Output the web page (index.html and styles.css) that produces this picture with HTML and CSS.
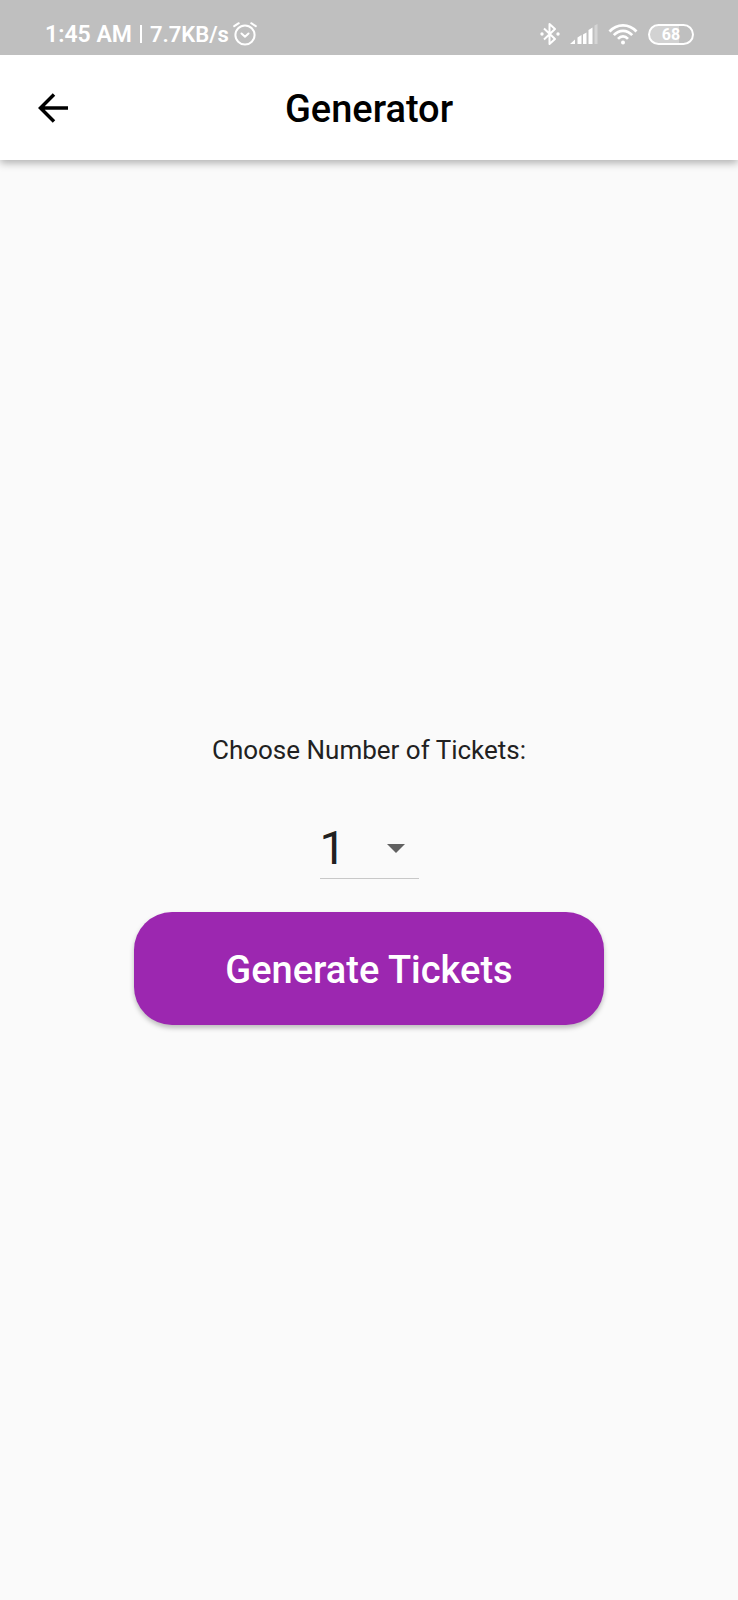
FILE: index.html
```html
<!DOCTYPE html>
<html lang="en">
<head>
<meta charset="utf-8">
<meta name="viewport" content="width=device-width, initial-scale=1">
<title>Generator</title>
<link rel="stylesheet" href="styles.css">
</head>
<body>
<div class="status-bar">
  <div class="status-left">
    <span class="clock">1:45 AM</span>
    <span class="divider"></span>
    <span class="speed">7.7KB/s</span>
    <svg class="alarm" width="24" height="24" viewBox="0 0 24 24" fill="none" stroke="#fff" stroke-width="2" stroke-linecap="round" stroke-linejoin="round" aria-hidden="true">
      <circle cx="12" cy="13" r="9.6"/>
      <path d="M1.2 4.2 5.800 1.200M22.800 4.200 18.200 1.200M8.500 11.500 12 14.800 15.500 11.500"/>
    </svg>
  </div>
  <div class="status-right">
    <svg width="20" height="24" viewBox="0 0 20 24" fill="none" stroke="#fff" stroke-width="2" stroke-linejoin="round" aria-hidden="true">
      <path d="M4 6.500 15 17 9.500 22V2L15 7 4 17.500"/>
      <circle cx="2" cy="12" r="1.700" fill="#fff" stroke="none"/>
      <circle cx="18" cy="12" r="1.700" fill="#fff" stroke="none"/>
    </svg>
    <svg class="signal" width="28" height="20" viewBox="0 0 28 20" fill="#fff" aria-hidden="true">
      <path d="M0 20 5 15.500V20zM7.500 13.500 11.500 11V20h-4zM13 10.500 16.500 8.500V20H13zM18.500 6 22.500 3.500V20h-4z"/>
      <path d="M24.500 1.500 27.500 0V20h-3z" opacity=".35"/>
    </svg>
    <svg class="wifi" width="30" height="22" viewBox="0 0 30 22" fill="none" stroke="#fff" stroke-width="2.700" aria-hidden="true">
      <path d="M1.500 8.500C9 .2 21 .2 28.500 8.500M5.800 12.200C11 6.500 19 6.500 24.200 12.200M10 15.800c3-3.200 7-3.200 10 0"/>
      <circle cx="15" cy="19.500" r="2" fill="#fff" stroke="none"/>
    </svg>
    <span class="battery">68</span>
  </div>
</div>
<header class="app-bar">
  <button class="back" type="button" aria-label="Back">
    <svg width="30" height="30" viewBox="0 0 30 30" fill="none" stroke="#000" stroke-width="3.500" aria-hidden="true">
      <path d="M30 15H3M16 1.500 2.500 15 16 28.500"/>
    </svg>
  </button>
  <h1 class="title">Generator</h1>
</header>
<main class="content">
  <label class="prompt" for="count">Choose Number of Tickets:</label>
  <div class="picker">
    <select class="count" id="count">
      <option>1</option>
      <option>2</option>
      <option>3</option>
      <option>4</option>
      <option>5</option>
      <option>6</option>
    </select>
    <svg class="caret" width="18" height="9" viewBox="0 0 18 9" fill="#616161" aria-hidden="true"><path d="M0 0h18L9 9z"/></svg>
  </div>
  <button class="generate" type="button">Generate Tickets</button>
</main>
</body>
</html>
```
FILE: styles.css
```css
* {
  box-sizing: border-box;
}

body {
  margin: 0;
  min-height: 100vh;
  display: flex;
  flex-direction: column;
  background: #fafafa;
  color: #212121;
  font-family: Roboto, "Noto Sans", sans-serif;
}

.status-bar {
  position: relative;
  z-index: 1;
  display: flex;
  justify-content: space-between;
  height: 55px;
  padding: 13px 44px 0 45px;
  background: #bfbfbf;
  color: #fff;
}

.status-left,
.status-right {
  display: flex;
  align-items: center;
  height: 42px;
}

.clock,
.speed {
  padding-top: 2px;
  font-size: 23px;
  font-weight: 600;
  line-height: 42px;
}

.speed {
  font-size: 22px;
}

.divider {
  width: 2px;
  height: 18px;
  margin: 0 8px;
  background: #fff;
}

.alarm {
  margin-left: 4px;
}

.signal {
  margin-left: 10px;
}

.wifi {
  margin-left: 10px;
}

.battery {
  width: 46px;
  height: 21px;
  margin-left: 10px;
  border: 2px solid #fff;
  border-radius: 11px;
  background: linear-gradient(to right, #d2d2d2 70%, #bfbfbf 70%);
  font-size: 16px;
  font-weight: 700;
  line-height: 17px;
  text-align: center;
}

.app-bar {
  display: grid;
  grid-template-columns: 106px 1fr 106px;
  align-items: center;
  height: 105px;
  background: #fff;
  box-shadow: 0 3px 8px rgba(0, 0, 0, 0.3);
}

.back {
  display: flex;
  justify-content: center;
  padding: 0;
  border: 0;
  background: none;
}

.title {
  margin: 0;
  padding-top: 2px;
  color: #000;
  font-size: 38px;
  font-weight: 500;
  line-height: 44px;
  text-align: center;
}

.content {
  flex: 1;
  display: flex;
  flex-direction: column;
  align-items: center;
  justify-content: center;
}

.prompt {
  font-size: 26px;
  line-height: 30px;
}

.picker {
  position: relative;
  margin: 52px 0 33px;
  border-bottom: 1px solid #c8c8c8;
}

.count {
  display: block;
  appearance: none;
  width: 99px;
  height: 61px;
  padding: 0;
  border: 0;
  background: none;
  color: #212121;
  font-family: inherit;
  font-size: 47px;
  line-height: 61px;
}

.caret {
  position: absolute;
  top: 27px;
  right: 14px;
  pointer-events: none;
}

.generate {
  width: 470px;
  max-width: 90%;
  height: 113px;
  padding: 2px 0 0;
  border: 0;
  border-radius: 38px;
  background: #9c27b0;
  box-shadow: 0 3px 5px rgba(0, 0, 0, 0.25);
  color: #fff;
  font-family: inherit;
  font-size: 38px;
  font-weight: 500;
}
```
